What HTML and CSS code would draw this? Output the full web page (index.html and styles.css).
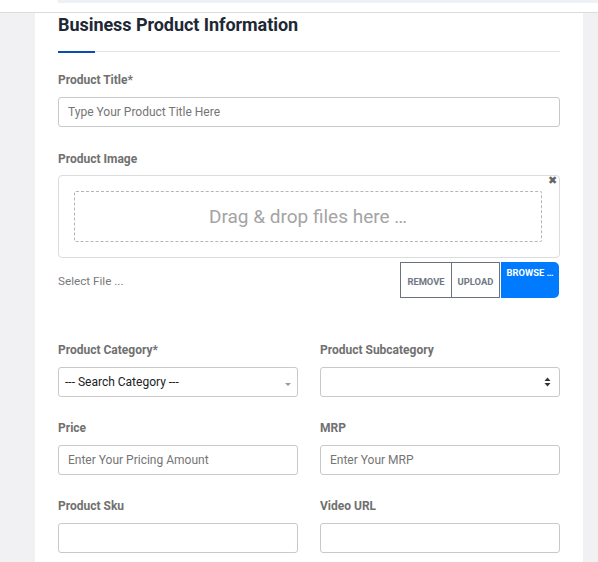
FILE: index.html
```html
<!DOCTYPE html>
<html>
<head>
<meta charset="utf-8">
<link rel="stylesheet" href="styles.css">
</head>
<body>
<div class="topbar"><div class="search"></div></div>
<div class="card">
  <h2 class="title">Business Product Information</h2>
  <div class="divider"><span class="accent"></span></div>

  <div class="field field-title">
    <label class="label">Product Title*</label>
    <div class="input"><span class="ph">Type Your Product Title Here</span></div>
  </div>

  <div class="field field-image">
    <label class="label">Product Image</label>
    <div class="dropzone">
      <span class="close">&#x2716;</span>
      <div class="dashed">Drag &amp; drop files here …</div>
    </div>
    <div class="filerow">
      <span class="selectfile">Select File ...</span>
      <div class="btns">
        <span class="btn btn-outline">REMOVE</span>
        <span class="btn btn-outline btn-up">UPLOAD</span>
        <span class="btn btn-blue">BROWSE …</span>
      </div>
    </div>
  </div>

  <div class="grid">
    <div class="field">
      <label class="label">Product Category*</label>
      <div class="input select"><span class="val">--- Search Category ---</span><span class="caret"></span></div>
    </div>
    <div class="field">
      <label class="label">Product Subcategory</label>
      <div class="input select"><span class="val"></span>
        <svg class="updown" width="7" height="10" viewBox="0 0 7 10"><path d="M3.5 0.5 L6.5 4 L0.5 4 Z M3.5 9.5 L6.5 6 L0.5 6 Z" fill="#333"/></svg>
      </div>
    </div>
    <div class="field">
      <label class="label">Price</label>
      <div class="input"><span class="ph">Enter Your Pricing Amount</span></div>
    </div>
    <div class="field">
      <label class="label">MRP</label>
      <div class="input"><span class="ph">Enter Your MRP</span></div>
    </div>
    <div class="field">
      <label class="label">Product Sku</label>
      <div class="input"></div>
    </div>
    <div class="field">
      <label class="label">Video URL</label>
      <div class="input"></div>
    </div>
  </div>
</div>
</body>
</html>
```
FILE: styles.css
```css
html, body {
  margin: 0;
  padding: 0;
  background: #f1f1f3;
  font-family: Roboto, "Liberation Sans", sans-serif;
  height: 562px;
  overflow: hidden;
}
.topbar {
  height: 12px;
  background: #ffffff;
  border-bottom: 1px solid #dcdcdc;
}
.search {
  margin-left: 57px;
  height: 3px;
  background: #eef2f7;
  border-bottom-left-radius: 6px;
}
.card {
  margin-left: 35px;
  width: 502px;
  padding: 0 23px;
  background: #ffffff;
  height: 560px;
}
.title {
  margin: 0;
  padding-top: 1px;
  font-size: 18px;
  line-height: 22px;
  font-weight: 700;
  color: #1e2835;
  letter-spacing: -0.05px;
}
.divider {
  margin-top: 15px;
  height: 2px;
  position: relative;
}
.divider::before {
  content: "";
  display: block;
  height: 1px;
  margin-top: 1px;
  background: #e4e4e4;
}
.accent {
  position: absolute;
  left: 0;
  top: 0;
  width: 37px;
  height: 2px;
  background: #0a4bb5;
}
.field {
  display: flex;
  flex-direction: column;
}
.label {
  font-size: 12px;
  line-height: 14px;
  font-weight: 700;
  color: #707070;
  margin-top: 19px;
  margin-bottom: 11px;
}
.field-title .label {
  margin-top: 20px;
  margin-bottom: 10px;
}
.input {
  height: 28px;
  border: 1px solid #c9c9c9;
  border-radius: 3px;
  display: flex;
  align-items: center;
  padding: 0 9px;
}
.ph {
  font-size: 12px;
  color: #757575;
}
.field-image .label {
  margin-top: 25px;
  margin-bottom: 9px;
}
.dropzone {
  position: relative;
  box-sizing: border-box;
  height: 83px;
  border: 1px solid #dcdcdc;
  border-radius: 4px;
  padding: 15px 17px 0 15px;
}
.close {
  position: absolute;
  right: 2px;
  top: -2px;
  font-size: 11px;
  color: #666;
}
.dashed {
  box-sizing: border-box;
  height: 51px;
  border: 1px dashed #b5b5b5;
  border-radius: 2px;
  display: flex;
  align-items: center;
  justify-content: center;
  font-size: 19px;
  color: #a4a4a4;
}
.filerow {
  margin-top: 4px;
  display: flex;
  justify-content: space-between;
  align-items: center;
  height: 36px;
  padding-right: 1px;
}
.selectfile {
  font-size: 11.7px;
  color: #7a7a7a;
  padding-top: 2px;
}
.btns {
  display: flex;
  height: 36px;
}
.btn {
  font-size: 9.4px;
  font-weight: 700;
  display: flex;
  align-items: center;
  justify-content: center;
  box-sizing: border-box;
  height: 36px;
}
.btn-outline {
  color: #6f7784;
  border: 1px solid #6c727c;
  width: 52px;
  padding-top: 2px;
}
.btn-up {
  border-left: none;
  width: 48px;
}
.btn-blue {
  background: #007bff;
  color: #ffffff;
  width: 58px;
  margin-left: 1px;
  align-items: flex-start;
  padding-top: 5px;
  border-radius: 0 5px 5px 0;
}
.grid {
  display: grid;
  grid-template-columns: 240px 240px;
  column-gap: 22px;
  margin-top: 22px;
}
.grid .label {
  margin-top: 24px;
  margin-bottom: 10px;
}
.grid .field:nth-child(1) .label,
.grid .field:nth-child(2) .label {
  margin-top: 23px;
}
.select {
  justify-content: space-between;
  padding: 0 6px 0 6px;
}
.val {
  font-size: 12px;
  color: #222;
}
.caret {
  width: 0;
  height: 0;
  border-left: 3px solid transparent;
  border-right: 3px solid transparent;
  border-top: 3px solid #999;
  margin-top: 4px;
}
.updown {
  margin-right: 2px;
}
```
